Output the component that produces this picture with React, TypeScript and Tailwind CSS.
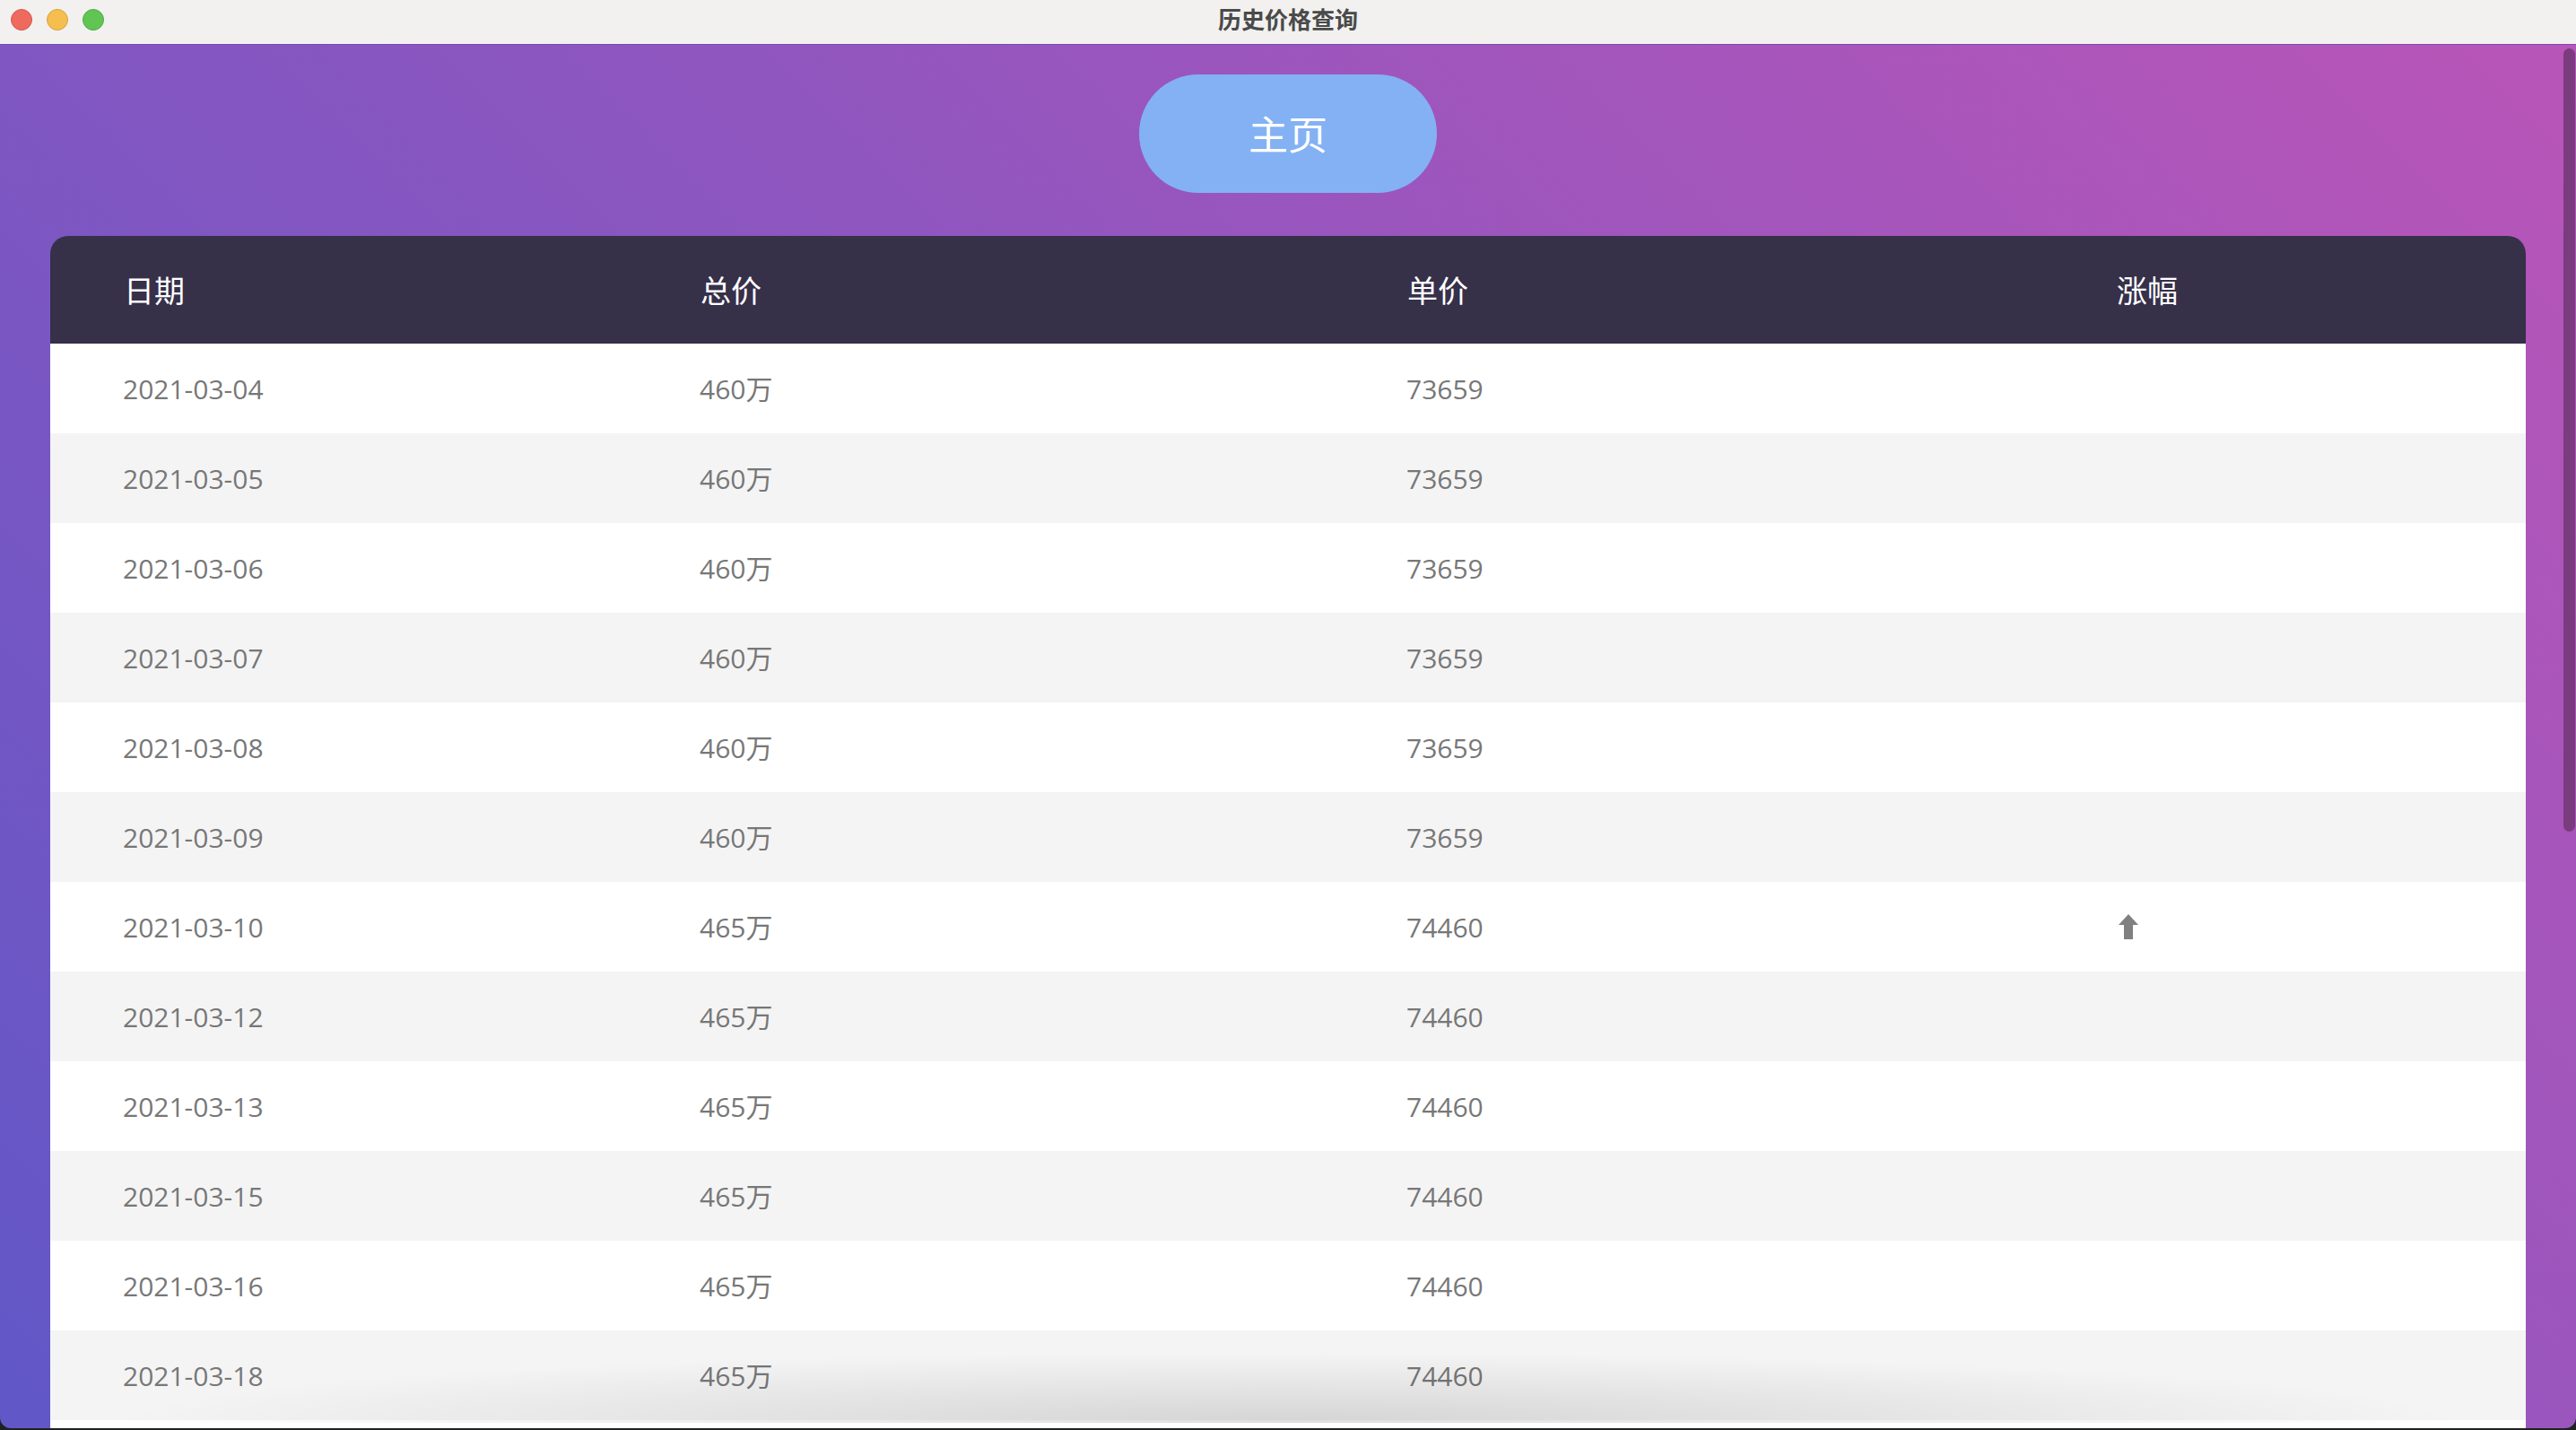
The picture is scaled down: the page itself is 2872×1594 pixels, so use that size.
import React from "react";

const rows: { date: string; total: string; unit: string; up?: boolean }[] = [
  { date: "2021-03-04", total: "460万", unit: "73659" },
  { date: "2021-03-05", total: "460万", unit: "73659" },
  { date: "2021-03-06", total: "460万", unit: "73659" },
  { date: "2021-03-07", total: "460万", unit: "73659" },
  { date: "2021-03-08", total: "460万", unit: "73659" },
  { date: "2021-03-09", total: "460万", unit: "73659" },
  { date: "2021-03-10", total: "465万", unit: "74460", up: true },
  { date: "2021-03-12", total: "465万", unit: "74460" },
  { date: "2021-03-13", total: "465万", unit: "74460" },
  { date: "2021-03-15", total: "465万", unit: "74460" },
  { date: "2021-03-16", total: "465万", unit: "74460" },
  { date: "2021-03-18", total: "465万", unit: "74460" },
];

function UpArrow() {
  return (
    <svg width="22" height="28" viewBox="0 0 22 28" className="block">
      <path d="M11 0 L22 12 L16 12 L16 28 L6 28 L6 12 L0 12 Z" fill="#808080" />
    </svg>
  );
}

export default function App() {
  return (
    <div className="w-[2872px] h-[1594px] bg-[#1e2220] overflow-hidden font-['Open_Sans','Noto_Sans_CJK_SC',sans-serif]">
      <div className="h-[1592px] rounded-b-[12px] overflow-hidden flex flex-col">
        {/* title bar */}
        <div className="h-[50px] shrink-0 bg-[#f2f1f0] relative flex items-center justify-center border-b border-[#7a48b0]">
          <div className="absolute left-[12px] top-[10px] flex gap-[16px]">
            <div className="w-[24px] h-[24px] rounded-full bg-[#ee6a5f] border border-[#d5574d]" />
            <div className="w-[24px] h-[24px] rounded-full bg-[#f5be4f] border border-[#d9a23c]" />
            <div className="w-[24px] h-[24px] rounded-full bg-[#61c554] border border-[#4ea945]" />
          </div>
          <span className="text-[26px] font-semibold text-[#4a4a4a] font-['Noto_Sans_CJK_SC',sans-serif] -mt-[8px]">
            历史价格查询
          </span>
        </div>

        {/* content */}
        <div className="flex-1 relative overflow-hidden bg-[linear-gradient(45deg,#6157c7,#b955b8)] px-[56px] pt-[33px] flex flex-col">
          <div className="flex justify-center">
            <button className="w-[332px] h-[132px] rounded-full bg-[#83b1f4] text-white text-[44px] font-['Noto_Sans_CJK_SC',sans-serif] flex items-center justify-center">
              <span className="-mt-[2px]">主页</span>
            </button>
          </div>

          <div className="mt-[48px] flex flex-col">
            <div className="h-[120px] bg-[#363049] rounded-t-[20px] grid grid-cols-[643px_788px_791px_1fr] pl-[82px] items-center text-white text-[34px] font-['Noto_Sans_CJK_SC',sans-serif]">
              <div className="-mt-[2px]">日期</div>
              <div className="-mt-[2px]">总价</div>
              <div className="-mt-[2px]">单价</div>
              <div className="-mt-[2px]">涨幅</div>
            </div>
            {rows.map((r, i) => (
              <div
                key={r.date}
                className={`h-[100px] shrink-0 grid grid-cols-[643px_788px_791px_1fr] pl-[81px] items-center text-[30px] text-[#777777] ${
                  i % 2 === 0 ? "bg-white" : "bg-[#f4f4f4]"
                }`}
              >
                <div>{r.date}</div>
                <div>{r.total}</div>
                <div>{r.unit}</div>
                <div className="pl-[3px]">{r.up ? <UpArrow /> : null}</div>
              </div>
            ))}
            <div className="h-[100px] shrink-0 bg-white" />
          </div>

          {/* bottom shadow */}
          <div className="absolute left-[110px] right-[110px] bottom-[6px] h-[80px] bg-[radial-gradient(ellipse_at_bottom,rgba(0,0,0,0.13),rgba(0,0,0,0)_70%)] pointer-events-none" />

          {/* scrollbar */}
          <div className="absolute right-[1px] top-[4px] w-[13px] h-[873px] rounded-full bg-[#7a3b7f]" />
        </div>
      </div>
    </div>
  );
}
